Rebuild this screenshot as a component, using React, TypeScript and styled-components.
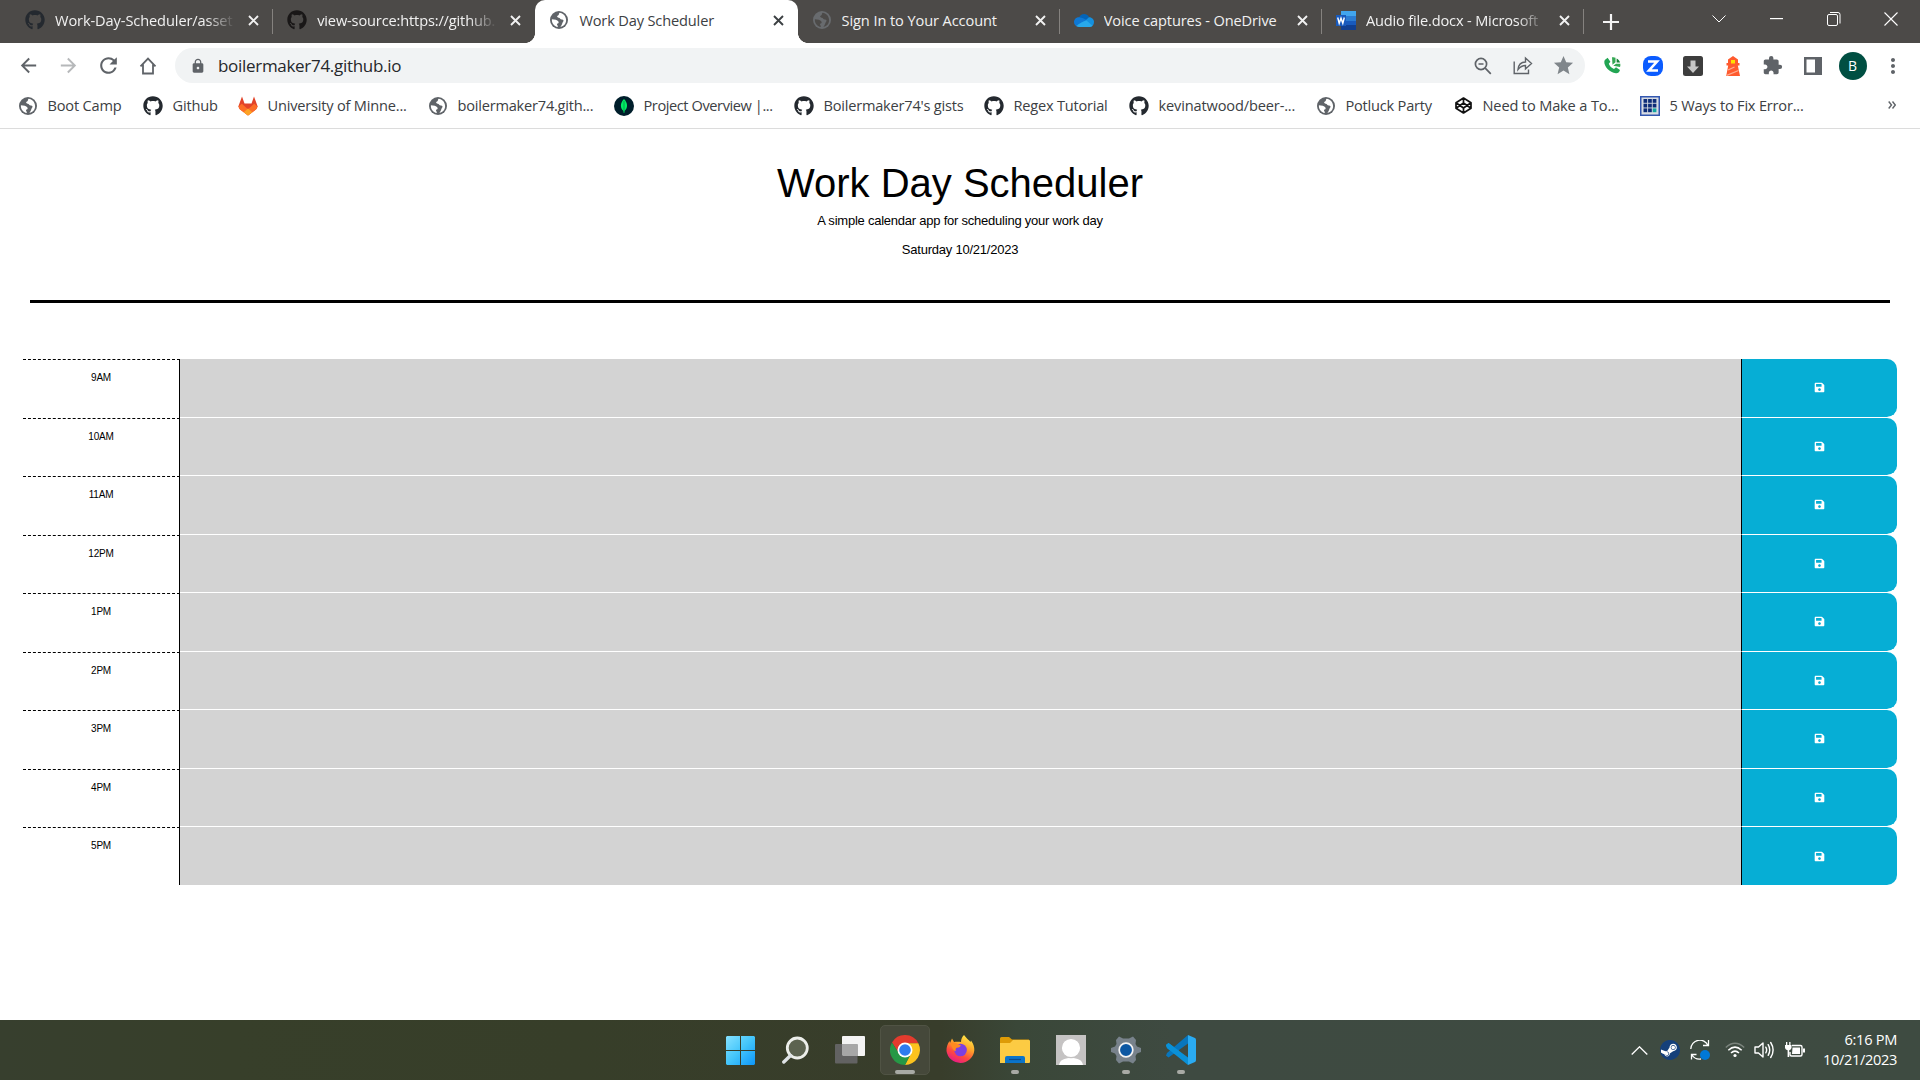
import React, { ReactNode } from "react";
import styled, { createGlobalStyle, css } from "styled-components";
import { FaGithub, FaSave, FaSteam } from "react-icons/fa";
import {
  MdArrowBack, MdArrowForward, MdRefresh, MdLock, MdStar, MdExtension, MdMoreVert,
} from "react-icons/md";

const Global = createGlobalStyle`
  * { box-sizing: border-box; }
  body { margin: 0; background: #fff; overflow: hidden; }
  svg { display: block; flex: none; }
`;

const Screen = styled.div`
  width: 1920px; height: 1080px; display: flex; flex-direction: column;
  font-family: "Open Sans", "Noto Sans", sans-serif; color: #3c4043;
`;

const Fit = styled.span<{ $ls?: number; $size?: number }>`
  font-size: ${p => p.$size ?? 14.6}px; letter-spacing: ${p => p.$ls ?? 0}px; white-space: nowrap; line-height: 20px;
`;

/* ---------- tab strip ---------- */
const TabStrip = styled.div`
  height: 43px; flex: none; background: #4c4a48; display: flex; padding-left: 11px;
`;
const Tab = styled.div<{ $active?: boolean; $sep?: boolean }>`
  position: relative; width: 262.2px; height: 43px; flex: none; display: flex; align-items: center;
  padding: 0 9.5px 3px 14px; color: #f1f1f1;
  ${p => p.$sep && css`&::after { content: ""; position: absolute; right: 0; top: 9px; width: 1px; height: 25px; background: #85827f; }`}
  ${p => p.$active && css`
    background: #fff; color: #3c4043; border-radius: 10px 10px 0 0;
    &::before, &::after { content: ""; position: absolute; bottom: 0; width: 10px; height: 10px; }
    &::before { left: -10px; background: radial-gradient(circle at 0 0, transparent 9.6px, #fff 10.2px); }
    &::after { right: -10px; background: radial-gradient(circle at 100% 0, transparent 9.6px, #fff 10.2px); }
  `}
`;
const TabTitle = styled.div<{ $fade?: boolean }>`
  margin-left: 10px; width: 180px; overflow: hidden; display: flex;
  ${p => p.$fade && css`mask-image: linear-gradient(90deg, #000 84%, transparent 100%);`}
`;
const TabClose = styled.div`
  margin-left: auto; width: 20px; display: flex; justify-content: center; padding-top: 1px;
`;
const WindowButtons = styled.div`
  display: flex; margin-left: auto; height: 38px;
`;
const WindowButton = styled.div`
  width: 57.5px; display: flex; align-items: center; justify-content: center;
`;
const NewTab = styled.div`
  width: 53px; display: flex; align-items: center; justify-content: center;
`;

/* ---------- toolbar ---------- */
const Toolbar = styled.div`
  height: 40px; flex: none; display: flex; align-items: center; padding: 5px 7px 0 8px; color: #5f6368;
`;
const ToolButton = styled.div<{ $dim?: boolean }>`
  width: 40px; height: 35px; flex: none; display: flex; align-items: center; justify-content: center;
  opacity: ${p => (p.$dim ? 0.45 : 1)};
`;
const Omnibox = styled.div`
  margin-left: 7px; width: 1410px; height: 35px; border-radius: 18px; background: #f1f3f4; flex: none;
  display: flex; align-items: center; padding: 0 2px 0 14.5px;
`;
const Address = styled.div`
  margin-left: 12.5px; color: #26282b; flex: 1; display: flex;
`;
const Extensions = styled.div`
  display: flex; margin-left: 7.500px;
`;
const Avatar = styled.div`
  width: 28px; height: 28px; border-radius: 50%; background: #004f42; color: #fff; font-size: 14px;
  display: flex; align-items: center; justify-content: center;
`;

/* ---------- bookmarks ---------- */
const Bookmarks = styled.div`
  height: 46px; flex: none; border-bottom: 1px solid #dcdcdc; display: flex; padding: 0 24px 0 18px; align-items: center;
`;
const Bookmark = styled.div<{ $w: number }>`
  width: ${p => p.$w}px; flex: none; display: flex; align-items: center; gap: 9.5px;
`;
const BookmarkName = styled(Fit)`
  padding-bottom: 2px;
`;
const More = styled.div`
  margin-left: auto; padding-bottom: 1px;
`;

/* ---------- page ---------- */
const Page = styled.main`
  flex: 1; background: #fff; padding: 0 23px; font-family: "Liberation Sans", Arial, sans-serif; color: #000;
`;
const Header = styled.header`
  height: 174px; margin: 0 7px; border-bottom: 3px solid #000; text-align: center; padding-top: 29px;
`;
const Title = styled.h1`
  margin: 0; font-weight: 400; font-size: 40px; line-height: 50px;
`;
const Lead = styled.p<{ $top: number }>`
  margin: ${p => p.$top}px 0 0; font-size: 13px; line-height: 20px; letter-spacing: -0.23px;
`;
const Planner = styled.section`
  margin-top: 56px;
`;
const Hour = styled.div`
  display: grid; grid-template-columns: 157px 1561px 156px; height: 58.5px;
  &:last-child { height: 58px; }
`;
const HourName = styled.div`
  border-top: 1px dashed #000; border-right: 1px solid #000; text-align: center; padding-top: 11px;
  font-size: 10px; line-height: 13px; letter-spacing: -0.2px;
`;
const Slot = styled.div`
  background: #d3d3d3; border-bottom: 1px solid #fff;
  ${Hour}:last-child & { border-bottom: 0; }
`;
const Save = styled.button`
  appearance: none; border: 0; border-left: 1px solid #000; border-bottom: 1px solid #fff; background: #06aed5; color: #fff;
  background-clip: padding-box; border-radius: 0 10px 10px 0; display: flex; align-items: center; justify-content: center; padding: 0;
  ${Hour}:last-child & { border-bottom: 0; }
`;

/* ---------- taskbar ---------- */
const Taskbar = styled.footer`
  height: 60px; flex: none; display: grid; grid-template-columns: 715px 1fr auto; color: #fff;
  background: linear-gradient(90deg, #373f2e 0%, #373f2a 12%, #373e29 30%, #383d2b 49%, #3a4738 53%, #3e4a41 61%, #3e4b41 100%);
`;
const Apps = styled.div`
  display: flex; grid-column: 2;
`;
const AppButton = styled.div<{ $active?: boolean; $run?: boolean }>`
  position: relative; width: 50px; height: 50px; margin: 5px 5.100px 0 0; border-radius: 5px; display: flex; align-items: center; justify-content: center;
  ${p => p.$active && css`background: #45483a; border: 1px solid #505344;`}
  ${p => (p.$active || p.$run) && css`&::after {
    content: ""; position: absolute; bottom: ${p.$active ? 0 : 1}px; left: 50%; width: ${p.$active ? 20 : 8}px; height: 4px;
    margin-left: ${p.$active ? -10 : -4}px; border-radius: 2px; background: #a8aaa5; }`}
`;
const Tray = styled.div`
  display: flex; align-items: center; padding-right: 23px;
`;
const TrayItem = styled.div<{ $w: number }>`
  width: ${p => p.$w}px; display: flex; justify-content: center; align-items: center;
`;
const SteamDisc = styled.div`
  width: 20px; height: 20px; border-radius: 50%; background: radial-gradient(circle, #fff 8.800px, #17427c 9.200px);
`;
const Clock = styled.div`
  width: 82.5px; display: flex; flex-direction: column; align-items: flex-end; padding-bottom: 2px;
`;

/* ---------- drawings ---------- */
const Globe = ({ color = "#5f6368", land = "#fff" }: { color?: string; land?: string }) => (
  <svg width="18" height="18" viewBox="0 0 18 18">
    <circle cx="9" cy="9" r="9" fill={color} />
    <path d="M9.6 1.8 C8.4 3 9.4 3.8 8 4.6 C6.4 5.3 7.2 6.6 8.6 6.8 C10.4 7 10 8.6 11.8 8.6 C13.6 8.5 14 10 13 11 C12 12 12.4 13.6 10.4 15.9 C14.2 15.2 16.2 12.2 16.1 9 C15.9 5.2 13.2 2.2 9.6 1.8Z M1.9 8.2 C1.6 12 4 15.4 7.8 16 C8 14.6 6.8 14.2 7 12.8 C8.6 12.6 9 11.6 8.4 10.4 C7.4 8.8 4.6 8.4 1.9 8.2Z" fill={land} />
  </svg>
);
const Cross = ({ color }: { color: string }) => (
  <svg width="11" height="11" viewBox="0 0 11 11" stroke={color} strokeWidth="1.9"><path d="M1 1L10 10M10 1L1 10" /></svg>
);
const OneDrive = () => (
  <svg width="20" height="14" viewBox="0 0 20 14">
    <path d="M5 5C6 1 12-1 15 4L12 9L4 9Z" fill="#0364b8" />
    <path d="M5 4.3C2 4.2 0 6.5 0 9c0 2 1 3.4 2.5 4.2L14 7.8 8.6 5Z" fill="#0f78d4" />
    <path d="M14.8 4.2C18 4 20 6.6 20 9 20 12 18 13.8 16 13.8L10 9Z" fill="#1490df" />
    <path d="M2.2 13C6 10.5 9 8 12.5 7.6L18.6 12.8C18 13.5 17 14 16 14H5C4 14 3 13.7 2.2 13Z" fill="#28a8ea" />
  </svg>
);
const Word = () => (
  <svg width="20" height="19" viewBox="0 0 20 19">
    <path d="M5 0h15v5H5z" fill="#41a5ee" /><path d="M5 5h15v5H5z" fill="#2b7cd3" />
    <path d="M5 10h15v5H5z" fill="#185abd" /><path d="M5 14h15v5H5z" fill="#103f91" />
    <rect y="4" width="10" height="11" fill="#185abd" />
    <path d="M1.7 6.5L3.2 12.3 5 7.2 6.8 12.3 8.3 6.5" fill="none" stroke="#fff" strokeWidth="1.4" />
  </svg>
);
const Mongo = () => (
  <svg width="20" height="20" viewBox="0 0 20 20"><circle cx="10" cy="10" r="10" fill="#001e2b" />
    <path d="M10 3C14 7 14 12 10.5 15L10.3 17H9.7L9.5 15C6 12 6 7 10 3Z" fill="#00ed64" /><path d="M10 5V16" stroke="#00924a" strokeWidth=".8" /></svg>
);
const GitlabMark = () => (
  <svg width="20" height="20" viewBox="0 0 20 20">
    <path d="M4 .5L6.5 7.5H13.5L16 .5 19.7 10.5 18.5 13 10 19.5 1.5 13 .3 10.5Z" fill="#e24329" />
    <path d="M.5 10.5L3.8 7.7 10 13.2 16.2 7.7 19.5 10.5 18 13.5 10 19.5 2 13.5Z" fill="#fc6d26" />
    <path d="M10 12.5L14.3 16.2 10 19.5 5.7 16.2Z" fill="#fca326" />
  </svg>
);
const Codepen = () => (
  <svg width="17" height="17" viewBox="0 0 17 17" fill="none" stroke="#111" strokeWidth="1.7" strokeLinejoin="round">
    <path d="M8.5 1L16 5.8V11.2L8.5 16 1 11.2V5.8ZM1 5.8L8.5 11 16 5.8M1 11.2L8.5 6 16 11.2M8.5 1V6M8.5 11V16" /></svg>
);
const GridMark = () => (
  <svg width="20" height="20" viewBox="0 0 20 20">
    <rect x=".75" y=".75" width="18.5" height="18.5" fill="#d8dce2" stroke="#3357b0" strokeWidth="1.5" />
    {[0, 1, 2].map(r => [0, 1, 2].map(c => (
      <rect key={`${r}${c}`} x={3.5 + c * 4.6} y={3 + r * 4.7} width="3.7" height="3.8" fill={r === 2 && c === 2 ? "#12a5a0" : "#0c2c78"} />
    )))}
  </svg>
);
const Home = () => (
  <svg width="18" height="18" viewBox="0 0 18 18" fill="none" stroke="#5f6368" strokeWidth="1.8"><path d="M1.500 9.300L9 1.600 16.500 9.300M4 7.500V16.500H14V7.500" /></svg>
);
const ZoomOut = () => (
  <svg width="18" height="18" viewBox="0 0 18 18" fill="none" stroke="#5f6368" strokeWidth="1.7"><circle cx="7" cy="7" r="5.6" /><path d="M11.2 11.2L16.8 16.8M4.5 7H9.5" /></svg>
);
const Share = () => (
  <svg width="20" height="19" viewBox="0 0 20 19" fill="none" stroke="#5f6368" strokeWidth="1.4"><path d="M1.2 5.5V17.5H15.5V13.5M5 13.5C5.500 8.500 8.500 6 12.500 6V2L18.500 7.500 12.500 13V9.500C9 9.500 7 11 5 13.500Z" /></svg>
);
const PhoneMark = () => (
  <svg width="17" height="17" viewBox="0 0 17 17" fill="#22a553">
    <path d="M.8 3L3.600.8 6.400 4.800 4.800 6.800C5.800 9.200 7.500 11 10 12L12 10.200 16 12.900C15.200 15.200 14 16.400 12 16.200 5.500 15.500 0 9.500.3 4.500Z" />
    <path d="M8 .3C9.500 0 10.500.2 11.500.8V5.200L8.500 7.800Z" fill="#34a853" />
    <path d="M12.600 1.400C14.500 2.400 15.500 3.600 16 5.500H12.600Z" fill="#188038" />
    <path d="M16.300 6.700C16.500 8 16.400 9 16 10L9.300 8.700 12 6.700Z" fill="#34a853" />
  </svg>
);
const ZMark = () => (
  <svg width="20" height="20" viewBox="0 0 20 20"><rect width="20" height="20" rx="8" fill="#0b5cff" /><path d="M5 5.5H14L6 14.5H15" fill="none" stroke="#fff" strokeWidth="2.6" /></svg>
);
const DownloadMark = () => (
  <svg width="20" height="20" viewBox="0 0 20 20"><rect width="20" height="20" rx="2.5" fill="#3d3d3d" /><path d="M7.5 4.5H12.5V10.5H16L10 17 4 10.5H7.5Z" fill="#c7c7c7" /></svg>
);
const Lighthouse = () => (
  <svg width="14" height="20" viewBox="0 0 14 20"><path d="M7 0L12 3.5V7H13.5V9.500H11.800L14 20H.2L2.200 9.500H.5V7H2V3.500Z" fill="#ff5a2e" />
    <rect x="5" y="4" width="4" height="3.5" fill="#ffe000" /><path d="M2 14L8.500 11M.8 19.300L12.500 14.500" stroke="#ffac90" strokeWidth="1.3" /></svg>
);
const SidePanel = () => (
  <svg width="18" height="18" viewBox="0 0 18 18"><path fillRule="evenodd" d="M0 0H18V18H0ZM2.5 2.5V15.5H11V2.5Z" fill="#5f6368" /></svg>
);

const WinLogo = () => (
  <svg width="29" height="29" viewBox="0 0 29 29"><defs><linearGradient id="win" x2="1" y2="1"><stop stopColor="#86e2ff" /><stop offset=".5" stopColor="#43c5fb" /><stop offset="1" stopColor="#0d96f8" /></linearGradient></defs>
    <path d="M1 0H14V14H0V1ZM15 0H28L29 1V14H15ZM0 15H14V29H1L0 28ZM15 15H29V28L28 29H15Z" fill="url(#win)" /></svg>
);
const SearchMark = () => (
  <svg width="27" height="28" viewBox="0 0 27 28"><circle cx="15.3" cy="12" r="10" fill="#5c6350" stroke="#eceeea" strokeWidth="2.8" /><path d="M8.5 19.5L1.8 26" stroke="#dfe3e6" strokeWidth="3.4" strokeLinecap="round" /></svg>
);
const TaskView = () => (
  <svg width="30" height="28" viewBox="0 0 30 28"><rect x="7" width="23" height="20" rx="1" fill="#f4f4f4" /><rect y="8" width="22.5" height="19.5" rx="1" fill="#626262" /><path d="M7 8H22.500V20H8L7 19Z" fill="#a7a7a7" /></svg>
);
const Chrome = () => (
  <svg width="30" height="30" viewBox="0 0 48 48">
    <path d="M24 13H45.3A24 24 0 0 0 3.2 12L14.5 29.5L24 24Z" fill="#e33b2e" />
    <path d="M33.5 29.5L24 48A24 24 0 0 0 45.3 13H24V24Z" fill="#fcc31e" />
    <path d="M14.5 29.5L3.2 12A24 24 0 0 0 24 48L33.5 29.5L24 24Z" fill="#269846" />
    <circle cx="24" cy="24" r="12" fill="#fff" /><circle cx="24" cy="24" r="9.3" fill="#2f7cf0" />
  </svg>
);
const Firefox = () => (
  <svg width="29" height="30" viewBox="0 0 29 30"><defs>
    <linearGradient id="ff" x1=".8" y1="0" x2=".3" y2="1"><stop stopColor="#fff04a" /><stop offset=".4" stopColor="#ffa42a" /><stop offset=".7" stopColor="#ff4a3d" /><stop offset="1" stopColor="#e5178c" /></linearGradient></defs>
    <path d="M18 0C20 3 23 5 24.500 7L25 5.500C27.500 9 28.500 12 28.300 15.500A14 13.800 0 0 1 .5 16C.3 12 1.500 9 3.500 6L4 8 6 3.500 8 7C10 6.500 13 6.500 15 7C15 4 16 2 18 0Z" fill="url(#ff)" />
    <circle cx="14.5" cy="15" r="6.3" fill="#7d3fe0" /><path d="M4 8.500C8 6 11 9 15 10.500L13 12.500C10 12 9 14 10 15.500C8 17 7 14 4 8.500Z" fill="#ff8a20" /></svg>
);
const Folder = () => (
  <svg width="30" height="27" viewBox="0 0 30 27"><path d="M0 1.500Q0 0 1.500 0H9L12 2.500H29V8H0Z" fill="#dd9b07" />
    <path d="M0 6H10L13 3H29Q30 3 30 4V25Q30 26 29 26H0Z" fill="#fccb43" />
    <path d="M5 26V21Q5 19 7 19H23Q25 19 25 21V26Z" fill="#0b74c9" /><path d="M9 22.500H21" stroke="#0b4b8c" strokeWidth="1.2" /></svg>
);
const Person = () => (
  <svg width="30" height="30" viewBox="0 0 30 30"><path d="M0 0H30V30H0Z" fill="#c5c3c3" /><path d="M3 30C4 25 8 23 15 23S26 25 27 30Z" fill="#fff" /><circle cx="15" cy="13" r="9.7" fill="#fff" stroke="#c5c3c3" strokeWidth="1.2" /></svg>
);
const Gear = () => (
  <svg width="30" height="30" viewBox="0 0 30 30">
    <path d="M8 1.500L12 3.500H18L22 1.500 25 5 24.500 9 26 11.500 30 13V17L26 18.500 24.500 21 25 25 22 28.500 18 26.500H12L8 28.500 5 25 5.500 21 4 18.500 0 17V13L4 11.500 5.500 9 5 5Z" fill="#78828b" />
    <circle cx="15" cy="15" r="6.8" fill="#0c57a2" stroke="#f3f3f3" strokeWidth="1.7" /></svg>
);
const VsCode = () => (
  <svg width="30" height="30" viewBox="0 0 30 30"><path d="M0 10L2.500 8 22 22.500V30L1 13Z" fill="#0a91d8" /><path d="M0 20.500L2.500 22.500 22 8.500V0L1 18Z" fill="#0876bd" /><path d="M0 10L2.500 8 13 15.800 8.600 19.300 1 13Z" fill="#0a91d8" />
    <path d="M22 0L29 3Q30 3.500 30 5V25Q30 26.500 29 27L22 30Z" fill="#2aabf2" /></svg>
);
const Sync = () => (
  <svg width="20" height="20" viewBox="0 0 20 20" fill="none" stroke="#fff" strokeWidth="1.3"><path d="M.8 9A9 9 0 0 1 18 5.500M18.500 0V5.500H13M1.500 19.500V14.500H6.500M2 15A9 9 0 0 0 11 19" /><circle cx="15" cy="15" r="5" fill="#0078d7" stroke="none" /></svg>
);
const Wifi = () => (
  <svg width="20" height="16" viewBox="0 0 20 16" fill="none" stroke="#fff" strokeWidth="1.5"><path d="M.8 5.500Q10-3 19.200 5.500" stroke="#7b847d" /><path d="M3.300 8.300Q10 2 16.700 8.300M6 11Q10 7.200 14 11" /><circle cx="10" cy="13.500" r="1.6" fill="#fff" stroke="none" /></svg>
);
const Volume = () => (
  <svg width="21" height="18" viewBox="0 0 21 18" fill="none" stroke="#fff" strokeWidth="1.4" strokeLinecap="round" strokeLinejoin="round"><path d="M1 6H4.500L9 2V16L4.500 12H1ZM11.800 6.200Q13.500 9 11.800 11.800M14.200 3.700Q17.300 9 14.200 14.300M16.700 1.500Q21.500 9 16.700 16.500" /></svg>
);
const Battery = () => (
  <svg width="20" height="16" viewBox="0 0 20 16"><path d="M7 3.500H15.500Q17 3.500 17 5V12.500Q17 14 15.500 14H6.500Q5 14 5 12.500V10" fill="none" stroke="#fff" strokeWidth="1.4" /><path d="M7.500 5.500H15V12H7ZM18 6.500H20V10.500H18ZM0 3H6.500V6Q6 8 4.200 8.300V15H2.600V8.300Q.5 8 0 6ZM1 0H2.300V3H1ZM4.200 0H5.500V3H4.200Z" fill="#fff" /></svg>
);

/* ---------- data ---------- */
type TabInfo = { icon: ReactNode; title: string; ls: number; fade?: boolean; active?: boolean; sep?: boolean };
const tabs: TabInfo[] = [
  { icon: <FaGithub size={20} color="#24292f" />, title: "Work-Day-Scheduler/asset", ls: -0.1, fade: true, sep: true },
  { icon: <FaGithub size={20} color="#191717" />, title: "view-source:https://github.", ls: -0.15, fade: true },
  { icon: <Globe />, title: "Work Day Scheduler", ls: -0.15, active: true },
  { icon: <Globe color="#686b6e" land="#4c4a48" />, title: "Sign In to Your Account", ls: -0.1, sep: true },
  { icon: <OneDrive />, title: "Voice captures - OneDrive", ls: -0.12, sep: true },
  { icon: <Word />, title: "Audio file.docx - Microsoft", ls: -0.17, fade: true, sep: true },
];
const gh = <FaGithub size={20} color="#24292f" />;
const bookmarks: [ReactNode, string, number, number][] = [
  [<Globe />, "Boot Camp", 125, -0.2],
  [gh, "Github", 95, -0.2],
  [<GitlabMark />, "University of Minne...", 190, -0.2],
  [<Globe />, "boilermaker74.gith...", 186, -0.22],
  [<Mongo />, "Project Overview |...", 180, -0.42],
  [gh, "Boilermaker74's gists", 190, -0.22],
  [gh, "Regex Tutorial", 145, -0.22],
  [gh, "kevinatwood/beer-...", 187, -0.15],
  [<Globe />, "Potluck Party", 137, -0.22],
  [<Codepen />, "Need to Make a To...", 187, -0.15],
  [<GridMark />, "5 Ways to Fix Error...", 170, -0.2],
];
const IconBox = styled.div`
  width: 20px; height: 20px; flex: none; display: flex; align-items: center; justify-content: center;
`;
const hours = ["9AM", "10AM", "11AM", "12PM", "1PM", "2PM", "3PM", "4PM", "5PM"];

export default function App() {
  return (
    <Screen>
      <Global />
      <TabStrip>
        {tabs.map(t => (
          <Tab key={t.title} $active={t.active} $sep={t.sep}>
            <IconBox>{t.icon}</IconBox>
            <TabTitle $fade={t.fade}><Fit $ls={t.ls}>{t.title}</Fit></TabTitle>
            <TabClose><Cross color={t.active ? "#3c4043" : "#f1f1f1"} /></TabClose>
          </Tab>
        ))}
        <NewTab><svg width="16" height="16" viewBox="0 0 16 16" stroke="#f4f4f4" strokeWidth="2.2"><path d="M8 0V16M0 8H16" /></svg></NewTab>
        <WindowButtons>
          <WindowButton><svg width="14" height="8" viewBox="0 0 14 8" fill="none" stroke="#fff"><path d="M.5.5L7 7 13.5.5" /></svg></WindowButton>
          <WindowButton><svg width="13" height="2" viewBox="0 0 13 2"><rect width="13" height="1.2" fill="#fff" /></svg></WindowButton>
          <WindowButton><svg width="14" height="14" viewBox="0 0 14 14" fill="none" stroke="#fff"><rect x=".5" y="2.5" width="10" height="11" rx="1.5" /><path d="M3 .5H11Q13 .5 13 2.5V11.5" /></svg></WindowButton>
          <WindowButton><svg width="14" height="14" viewBox="0 0 14 14" stroke="#fff" strokeWidth="1.1"><path d="M.5.5L13.5 13.5M13.5.5L.5 13.5" /></svg></WindowButton>
        </WindowButtons>
      </TabStrip>

      <Toolbar>
        <ToolButton><MdArrowBack size={23} /></ToolButton>
        <ToolButton $dim><MdArrowForward size={23} /></ToolButton>
        <ToolButton><MdRefresh size={25} /></ToolButton>
        <ToolButton><Home /></ToolButton>
        <Omnibox>
          <MdLock size={16} />
          <Address><Fit $size={17} $ls={-0.3}>boilermaker74.github.io</Fit></Address>
          <ToolButton><ZoomOut /></ToolButton>
          <ToolButton><Share /></ToolButton>
          <ToolButton><MdStar size={23} color="#80868b" /></ToolButton>
        </Omnibox>
        <Extensions>
          <ToolButton><PhoneMark /></ToolButton>
          <ToolButton><ZMark /></ToolButton>
          <ToolButton><DownloadMark /></ToolButton>
          <ToolButton><Lighthouse /></ToolButton>
          <ToolButton><MdExtension size={21} /></ToolButton>
          <ToolButton><SidePanel /></ToolButton>
          <ToolButton><Avatar>B</Avatar></ToolButton>
          <ToolButton><MdMoreVert size={24} /></ToolButton>
        </Extensions>
      </Toolbar>

      <Bookmarks>
        {bookmarks.map(([icon, name, w, ls]) => (
          <Bookmark key={name} $w={w}><IconBox>{icon}</IconBox><BookmarkName $ls={ls}>{name}</BookmarkName></Bookmark>
        ))}
        <More><svg width="8" height="8" viewBox="0 0 8 8" fill="none" stroke="#5f6368" strokeWidth="1.4"><path d="M.7.5L3.5 4 .7 7.5M4.500.5L7.300 4 4.500 7.500" /></svg></More>
      </Bookmarks>

      <Page>
        <Header>
          <Title>Work Day Scheduler</Title>
          <Lead $top={3}>A simple calendar app for scheduling your work day</Lead>
          <Lead $top={9}>Saturday 10/21/2023</Lead>
        </Header>
        <Planner>
          {hours.map(h => (
            <Hour key={h}>
              <HourName>{h}</HourName>
              <Slot />
              <Save aria-label="Save"><FaSave size={11} /></Save>
            </Hour>
          ))}
        </Planner>
      </Page>

      <Taskbar>
        <Apps>
          <AppButton><WinLogo /></AppButton>
          <AppButton><SearchMark /></AppButton>
          <AppButton><TaskView /></AppButton>
          <AppButton $active><Chrome /></AppButton>
          <AppButton><Firefox /></AppButton>
          <AppButton $run><Folder /></AppButton>
          <AppButton><Person /></AppButton>
          <AppButton $run><Gear /></AppButton>
          <AppButton $run><VsCode /></AppButton>
        </Apps>
        <Tray>
          <TrayItem $w={30}><svg width="17" height="9" viewBox="0 0 17 9" fill="none" stroke="#fff" strokeWidth="1.3"><path d="M.7 8.5L8.5.8 16.300 8.500" /></svg></TrayItem>
          <TrayItem $w={30}><SteamDisc><FaSteam size={20} color="#15407a" /></SteamDisc></TrayItem>
          <TrayItem $w={30}><Sync /></TrayItem>
          <TrayItem $w={40}><Wifi /></TrayItem>
          <TrayItem $w={20}><Volume /></TrayItem>
          <TrayItem $w={40}><Battery /></TrayItem>
          <Clock><Fit $ls={-0.3}>6:16 PM</Fit><Fit $ls={-0.35}>10/21/2023</Fit></Clock>
        </Tray>
      </Taskbar>
    </Screen>
  );
}
